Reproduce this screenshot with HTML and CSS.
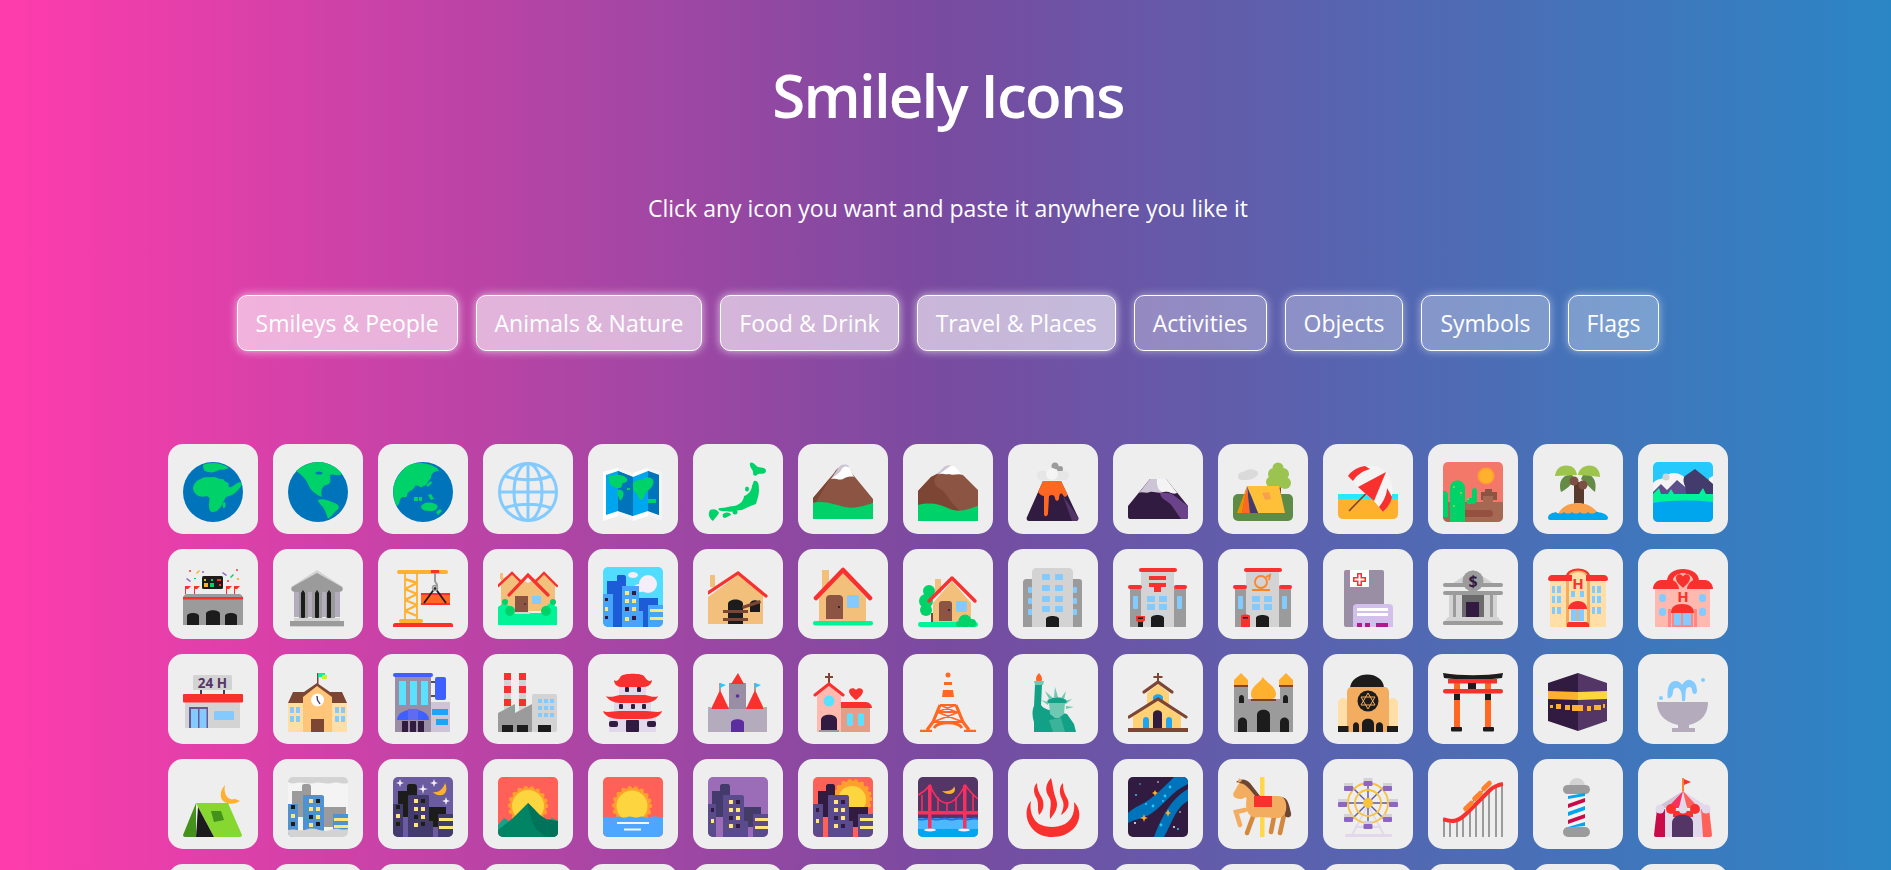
FILE: index.html
```html
<!DOCTYPE html>
<html lang="en">

<head>
	<meta charset="UTF-8">
	<meta name="viewport" content="width=device-width, initial-scale=1.0">
	<title>Smilely Icons</title>
	<link rel="stylesheet" href="styles.css">
</head>

<body>
	<h1>Smilely Icons</h1>
	<p class="subtitle">Click any icon you want and paste it anywhere you like it</p>

	<!-- Categories -->
	<div class="categories">
		<button class="category category-glow">Smileys &amp; People</button>
		<button class="category category-glow">Animals &amp; Nature</button>
		<button class="category category-glow">Food &amp; Drink</button>
		<button class="category category-glow">Travel &amp; Places</button>
		<button class="category">Activities</button>
		<button class="category">Objects</button>
		<button class="category">Symbols</button>
		<button class="category">Flags</button>
	</div>

	<!-- Icons -->
	<div class="icons">
		<!-- row 1 -->
		<div class="tile"><svg class="icon" viewBox="0 0 60 60"><circle cx="30" cy="30" r="30" fill="#0074BA"/><path fill="#00D26A" d="M20 3C26 0 38 0 46 6L40 8C36 6 32 12 26 10C22 10 20 8 20 3ZM10 27C10 22 14 18 18 17C22 14 26 16 30 15C34 15 36 18 40 17C42 20 44 20 46 22C44 26 48 26 50 24C54 22 56 18 59 22C56 28 52 32 46 34C42 34 42 38 40 40C38 46 34 50 30 50C26 50 26 46 26 42C26 38 28 36 24 34C18 36 12 34 10 27Z"/><ellipse cx="41" cy="43" rx="1.5" ry="3" fill="#00D26A"/></svg></div>
		<div class="tile"><svg class="icon" viewBox="0 0 60 60"><circle cx="30" cy="30" r="30" fill="#0074BA"/><path fill="#00D26A" d="M8 9C14 3 24 0 32 0C42 1 50 6 54 12C50 15 44 11 42 13C42 17 44 22 38 23C34 24 32 30 34 35C28 33 22 28 20 22C18 17 14 13 8 9ZM30 38C34 36 40 38 44 40C50 42 52 44 50 47C46 50 44 54 40 57C38 50 36 46 34 44C32 42 30 40 30 38Z"/><ellipse cx="31" cy="11" rx="3.5" ry="1.5" fill="#0074BA"/></svg></div>
		<div class="tile"><svg class="icon" viewBox="0 0 60 60"><circle cx="30" cy="30" r="30" fill="#0074BA"/><path fill="#00D26A" d="M16 3C24 0 34 0 44 6L46 9C40 9 38 12 38 16C34 20 34 24 30 24C28 28 26 22 22 24C20 30 14 28 14 34C12 38 8 30 6 42L4 44C0 38 -1 26 2 20C6 12 10 6 16 3Z"/><path fill="#00D26A" d="M28 44C32 39 40 40 44 43C46 46 42 50 36 49C32 49 28 48 28 44ZM43 50L47 47L49 49L45 53ZM21 35H25V39H21ZM26 35H29V39H26ZM35 33L38 32L41 37L38 38ZM33 23L38 19L39 21L35 25Z"/></svg></div>
		<div class="tile"><svg class="icon" viewBox="0 0 60 60"><g fill="none" stroke="#83CBFF" stroke-width="3"><circle cx="30" cy="30" r="28.5"/><ellipse cx="30" cy="30" rx="14" ry="28.5"/><path d="M30 2V58M2 30H58M7 14C20 19 40 19 53 14M7 46C20 41 40 41 53 46"/></g></svg></div>
		<div class="tile"><svg class="icon" viewBox="0 0 60 60"><path fill="#F4F4F4" d="M0 10L15 6L30 11L45 6L59 10V59L45 54L30 59L15 54L0 59Z"/><path fill="#FFFFFF" d="M0 10L15 6V54L0 59ZM30 11L45 6V54L30 59Z"/><path fill="#00A6ED" d="M3 13L15 9L30 15L45 9L56 13V53L45 49L30 54L15 49L3 53Z"/><path fill="#0074BA" d="M15 9L30 15V54L15 49ZM45 9L56 13V53L45 49Z"/><path fill="#00D26A" d="M6 15C10 12 18 12 22 15C26 17 24 21 20 21C18 23 20 26 16 26C12 26 8 24 6 20ZM15 28C18 27 22 29 20 34C19 38 17 40 16 36C14 32 14 30 15 28ZM30 21C34 16 38 20 42 16C48 14 52 18 50 22C48 28 44 28 42 32C40 38 38 40 36 36C34 30 30 30 30 26ZM45 37H53V41H45ZM24 26H27V28H24Z"/></svg></div>
		<div class="tile"><svg class="icon" viewBox="0 0 60 60"><path fill="#00D26A" d="M42 1C45 -1 47 3 50 5C53 6 58 5 58 9C57 13 54 11 50 12C48 15 45 14 45 11C46 8 41 6 42 1ZM46 19C50 18 51 22 51 28C51 33 49 38 48 42C42 44 38 46 34 48C28 48 24 51 18 49C12 50 8 47 12 46C18 46 22 44 26 44C32 43 36 38 36 34C40 33 44 28 44 24C45 22 45 20 46 19ZM15 52C18 50 22 50 23 53L17 56C15 56 14 54 15 52ZM2 48C6 46 10 48 11 51C10 53 8 55 5 59C2 57 -1 53 2 48Z"/><ellipse cx="39" cy="27" rx="2" ry="2.5" fill="#00D26A"/><circle cx="27" cy="50" r="2.5" fill="#00D26A"/></svg></div>
		<div class="tile"><svg class="icon" viewBox="0 0 60 60"><path fill="#8C5543" d="M0 36L21 11C25 3 33 3 37 9L60 37V50H0Z"/><path fill="#7D4533" d="M0 36L18 15L3 40H0Z"/><path fill="#CDC4D6" d="M18 17L26 5C29 2 32 2 36 4L30 14Z"/><path fill="#FFFFFF" d="M18 17L27 10C30 3 34 4 36 6L41 15C37 14 33 15 30 17C26 19 21 15 18 17Z"/><path fill="#00D26A" d="M0 41C10 38 20 42 32 45C42 47 50 44 60 41V57H0Z"/></svg></div>
		<div class="tile"><svg class="icon" viewBox="0 0 60 60"><path fill="#8C5543" d="M0 29L13 15L26 8C30 3 36 3 39 8L46 14L60 28V50H0Z"/><path fill="#7D4533" d="M0 29L13 15L20 12C14 18 16 24 22 27C28 30 30 36 35 42L42 49H0Z"/><path fill="#CDC4D6" d="M19 12L26 5C29 3 32 3 34 4L28 11Z"/><path fill="#FFFFFF" d="M20 13C24 10 26 13 31 12C35 14 40 11 45 13L39 7C36 3 33 3 31 5Z"/><path fill="#00D26A" d="M0 43C12 40 22 42 32 47C42 51 50 47 60 44V59H0Z"/></svg></div>
		<div class="tile"><svg class="icon" viewBox="0 0 60 60"><path fill="#321B41" d="M20 19H38L55 55C56 57 55 59 53 59H6C4 59 3 57 4 55Z"/><path fill="#533566" d="M40 34L55 55C56 57 55 59 53 59H49Z"/><g fill="#9B9B9B"><circle cx="32" cy="4" r="3.5"/><circle cx="37" cy="7" r="3"/></g><path fill="#E6E6E6" d="M14 12C14 9 18 8 22 9H40C44 9 46 11 46 14C46 16 44 18 40 18H18C15 18 14 15 14 12Z"/><circle cx="29" cy="12" r="6" fill="#F4F4F4"/><path fill="#FF6723" d="M20 19H38L44 31C45 35 41 36 40 33C38 30 36 32 36 37C35 40 32 39 32 36C31 32 28 33 26 34L25 52C24 55 21 55 21 52V34C18 34 16 31 15 30Z"/></svg></div>
		<div class="tile"><svg class="icon" viewBox="0 0 60 60"><path fill="#321B41" d="M0 44L22 17H38L60 44V55C60 56 59 57 58 57H2C1 57 0 56 0 55Z"/><path fill="#6B438B" d="M32 30C38 32 40 30 44 32L60 44V55C60 57 59 57 58 57H53L44 44C40 38 32 38 32 30Z"/><path fill="#CDC4D6" d="M11 31L22 17H38L49 31C44 33 40 28 36 30C30 32 26 29 22 30C18 32 14 29 11 31Z"/><path fill="#F4F4F4" d="M29 17H38L49 31C44 33 41 28 36 30C32 30 28 26 29 17Z"/></svg></div>
		<div class="tile"><svg class="icon" viewBox="0 0 60 60"><path fill="#DADADA" d="M5 14C5 10 10 10 12 9C16 6 22 7 25 10C26 14 20 18 14 18H8C6 18 5 16 5 14Z"/><rect y="32" width="60" height="27" rx="5" fill="#5E8C46"/><rect x="43" y="22" width="5" height="12" fill="#7D4533"/><g fill="#9AC44F"><circle cx="45" cy="6" r="5.5"/><circle cx="41" cy="12" r="6"/><circle cx="50" cy="12" r="6"/><circle cx="39" cy="20" r="6"/><circle cx="52" cy="21" r="6"/><circle cx="45" cy="19" r="7"/></g><path fill="#FFC039" d="M14 24H46L52 51H25Z"/><path fill="#F09000" d="M14 24L4 51H9Z"/><path fill="#FF6723" d="M14 24L9 51H17Z"/><path fill="#433B6B" d="M14 24L17 51H25Z"/><path fill="#F9A04C" d="M29 31L36 30L38 37L32 38Z"/></svg></div>
		<div class="tile"><svg class="icon" viewBox="0 0 60 60"><path fill="#26EAFC" d="M0 37V32H60V40Z"/><path fill="#FFB02E" d="M0 37H60V52C60 55 58 57 55 57H5C2 57 0 55 0 52Z"/><path stroke="#7D4533" stroke-width="1.6" d="M11 49L48 11"/><path fill="#F4F4F4" d="M10 14C18 3 38 0 48 10C58 20 56 40 45 50L36 39L20 25Z"/><path fill="#F8312F" d="M20 25L48 10L36 39Z"/><path fill="#F8312F" d="M10 14C13 9 20 5 27 4L32 7C24 9 18 14 15 19ZM45 50C49 46 53 41 54 35L49 26C49 33 45 40 41 45Z"/></svg></div>
		<div class="tile"><svg class="icon icon-scene" viewBox="0 0 60 60"><rect width="60" height="60" fill="#F4786A"/><circle cx="43" cy="14" r="8.5" fill="#FF9F2E"/><circle cx="43" cy="14" r="7" fill="#FFB02E"/><path fill="#8C5543" d="M38 38V30H42V27H49V30H54V38Z"/><path fill="#A56953" d="M0 40H60V60H0Z"/><path fill="#A56953" d="M40 34H50V42H40Z"/><rect x="14" y="48" width="36" height="7" rx="3.5" fill="#96503F"/><path fill="#00D26A" d="M7 26C7 16 22 16 22 26V60H7ZM24 42H30C32 42 34 40 34 38V29C34 25 29 25 29 29V36H24ZM5 55H0V29H2C4 29 5 31 5 33Z"/><path fill="#7FD04C" d="M10 24H12V26H10ZM17 30H19V32H17ZM10 43H12V45H10ZM24 36H26V38H24Z"/></svg></div>
		<div class="tile"><svg class="icon" viewBox="0 0 60 60"><rect x="26" y="20" width="10" height="24" fill="#593B2D"/><path fill="#F9A04C" d="M10 52C14 44 22 41 30 41C38 41 46 45 51 52Z"/><path fill="#00A6ED" d="M0 56C0 52 4 51 8 50C10 52 14 52 16 50C18 52 22 52 24 50C26 52 30 52 32 50C34 52 38 52 40 50C42 52 46 52 48 50C52 50 60 52 60 56C60 58 58 58 56 58H4C2 58 0 58 0 56Z"/><path fill="#648B45" d="M24 13C14 12 10 20 13 30C18 28 24 22 27 17ZM35 13C42 11 50 16 47 30C42 26 37 20 33 17Z"/><path fill="#9DC44D" d="M7 14C8 6 14 2 22 4C26 5 28 8 29 13C22 13 14 14 7 14ZM30 13C31 6 38 2 45 4C50 6 52 10 52 15C44 14 36 13 30 13Z"/><circle cx="26" cy="19" r="4.5" fill="#7D4F45"/><circle cx="35" cy="23" r="4.5" fill="#7D4F45"/></svg></div>
		<div class="tile"><svg class="icon icon-scene" viewBox="0 0 60 60"><rect width="60" height="60" fill="#26C9FC"/><path fill="#F4F4F4" d="M0 21C4 16 8 18 12 15C16 10 24 10 30 14L46 30H0Z"/><circle cx="13" cy="15" r="3.5" fill="#D3D3D3"/><path fill="#5B4F8C" d="M0 30L8 22L14 28L24 18L38 30V36H0Z"/><path fill="#F4F4F4" d="M60 14L56 16V24L60 26Z"/><path fill="#433B6B" d="M32 14L42 7L52 15L60 22V36H34L32 24C30 20 30 16 32 14Z"/><path fill="#00F397" d="M0 32L6 26L8 32H15L18 27L21 32H24H46L50 26L53 32H60V40H0Z"/><path fill="#00A6ED" d="M0 41C20 38 40 38 60 40V60H0Z"/></svg></div>

		<!-- row 2 -->
		<div class="tile"><svg class="icon" viewBox="0 0 60 60"><path fill="#9B9B9B" d="M0 31C0 29 2 27 4 27H56C58 27 60 29 60 31V58H0Z"/><rect y="30" width="60" height="2.5" fill="#F8312F"/><path fill="#1C1C1C" d="M4 58V49C4 45 16 45 16 49V58ZM23 58V47C23 42 37 42 37 47V58ZM42 58V49C42 45 54 45 54 49V58Z"/><rect x="19" y="9" width="21" height="13" rx="1.5" fill="#1C1C1C"/><g fill="#FFB02E"><rect x="21" y="12" width="2" height="2"/><rect x="21" y="16" width="4" height="4"/></g><g fill="#00D26A"><rect x="27" y="16" width="4" height="4"/><rect x="28" y="12" width="2" height="2"/></g><rect x="34" y="12" width="4" height="2" fill="#F8312F"/><rect x="36" y="17" width="2" height="2" fill="#F8312F"/><g fill="#F8312F"><path d="M2 19H8L5 22H3V27H2ZM11 19H17L14 22H12V27H11ZM43 19H49L46 22H44V27H43ZM51 19H57L54 22H52V27H51Z"/><circle cx="7" cy="4" r="1"/><circle cx="54" cy="3" r="1"/><circle cx="45" cy="14" r="1"/></g><g fill="#8D65C5"><path d="M4 11L8 14L7 15L3 12ZM40 5L44 8L43 9L39 6Z"/><circle cx="20" cy="5" r="1"/></g><path fill="#FFB02E" d="M13 6L16 3L17 4L14 7ZM54 11H56V13H54Z"/><path fill="#00D26A" d="M11 11H13V12H11ZM47 10L50 7L51 8L48 11Z"/></svg></div>
		<div class="tile"><svg class="icon" viewBox="0 0 60 60"><path fill="#D3D3D3" d="M29 3L55 20H3Z"/><path fill="#9B9B9B" d="M29 6L54 20C56 22 54 25 51 25H7C4 25 2 22 4 20Z"/><rect x="6" y="25" width="46" height="25" fill="#B4ACBC"/><g fill="#9B9B9B"><rect x="11" y="25" width="9" height="26"/><rect x="24" y="25" width="10" height="26"/><rect x="38" y="25" width="9" height="26"/></g><g fill="#1C1C1C"><path d="M15 23L17 26V50L15 53L13 50V26Z"/><path d="M29 23L31 26V50L29 53L27 50V26Z"/><path d="M41 23L43 26V50L41 53L39 50V26Z"/></g><rect x="2" y="54" width="54" height="5" fill="#9B9B9B"/><rect x="2" y="59" width="54" height="1" fill="#D3D3D3"/><rect x="6" y="51" width="46" height="3" fill="#D3D3D3"/></svg></div>
		<div class="tile"><svg class="icon" viewBox="0 0 60 60"><rect x="4" y="3" width="51" height="4" rx="2" fill="#FFB02E"/><g fill="none" stroke="#FFB02E" stroke-width="1.8"><path d="M12 7V53M24 7V53"/><path stroke-width="2.4" d="M12 12L24 16M24 16L12 22M12 22L24 27M24 27L12 33M12 33L24 38M24 38L12 44M12 44L24 49"/></g><rect x="6" y="52" width="24" height="4" rx="2" fill="#FFB02E"/><path fill="#F8312F" d="M0 58C0 57 1 56 2 56H58C59 56 60 57 60 58V60H0Z"/><rect x="38" y="3" width="8" height="3" fill="#F8312F"/><path stroke="#9B9B9B" stroke-width="2" fill="none" d="M42 6V14C42 16 46 17 43 20"/><rect x="28" y="26" width="29" height="12" fill="#FF6723"/><rect x="28" y="26" width="29" height="2" fill="#F8312F"/><rect x="28" y="36" width="29" height="2" fill="#F8312F"/><path stroke="#1C1C1C" stroke-width="1.8" fill="none" d="M31 36L42 21L53 36"/><circle cx="42" cy="21" r="2.5" fill="none" stroke="#9B9B9B" stroke-width="1.5"/></svg></div>
		<div class="tile"><svg class="icon" viewBox="0 0 60 60"><path fill="#F3C07B" d="M3 12L14 7L30 16L46 7L57 15V44H3Z"/><rect x="2" y="6" width="3" height="6" fill="#F3C07B"/><g fill="none" stroke="#F8312F" stroke-width="2.4" stroke-linecap="round"><path d="M0 19L14 6L22 14M38 14L46 6L59 19"/><path stroke-width="3.2" d="M11 28L30 8L50 28"/></g><path fill="#8C5543" d="M17 29H30V46H17Z"/><circle cx="27" cy="37" r=".8" fill="#1C1C1C"/><rect x="34" y="29" width="9" height="8" fill="#83CBFF"/><path fill="#00F397" d="M0 40L6 36L13 40V46H46V41L52 36L59 40V58H0Z"/><rect x="16" y="45" width="16" height="2" fill="#D3D3D3"/><g fill="#00D26A"><circle cx="12" cy="44" r="5"/><circle cx="7" cy="35" r="3"/><circle cx="48" cy="44" r="5"/><circle cx="55" cy="35" r="3"/></g></svg></div>
		<div class="tile"><svg class="icon icon-scene" viewBox="0 0 60 60"><rect width="60" height="60" fill="#51DDFF"/><circle cx="45" cy="17" r="9" fill="#F3EEF8"/><ellipse cx="37" cy="21" rx="7" ry="4" fill="#F3EEF8"/><ellipse cx="30" cy="8" rx="5" ry="3" fill="#F3EEF8"/><path fill="#1C5CD7" d="M4 60V14H14V9C14 8 15 8 16 8H21C22 8 23 9 23 10V60ZM36 31H55V60H36Z"/><path fill="#46A4FB" d="M0 27H10V60H0ZM19 19H36V44H40V60H19ZM45 38H60V60H45Z"/><g fill="#321B41"><rect x="2" y="31" width="3" height="3"/><rect x="2" y="49" width="3" height="3"/><rect x="29" y="24" width="4" height="4"/><rect x="22" y="40" width="4" height="4"/><rect x="29" y="49" width="4" height="4"/></g><g fill="#FFE57A"><rect x="2" y="40" width="3" height="4"/><rect x="22" y="24" width="4" height="4"/><rect x="22" y="32" width="4" height="4"/><rect x="29" y="32" width="4" height="4"/><rect x="29" y="40" width="4" height="4"/><rect x="22" y="50" width="4" height="4"/><rect x="47" y="42" width="13" height="3"/><rect x="47" y="50" width="13" height="3"/></g></svg></div>
		<div class="tile"><svg class="icon" viewBox="0 0 60 60"><rect x="2" y="8" width="5" height="12" fill="#F3C07B"/><path fill="#F3C07B" d="M0 30L30 8L55 28V57H0Z"/><path fill="none" stroke="#F8312F" stroke-width="3.2" stroke-linecap="round" d="M0 26L30 6L58 29"/><path fill="#1C1C1C" d="M20 57V37C20 31 35 31 35 37V57Z"/><rect x="15" y="43" width="25" height="3" fill="#7D4533"/><rect x="15" y="51" width="25" height="3" fill="#7D4533"/><path fill="#1C1C1C" d="M42 45V37C42 32 52 32 52 37V45Z"/><path fill="#7D4533" d="M34 39L52 33L53 36L35 42Z"/></svg></div>
		<div class="tile"><svg class="icon" viewBox="0 0 60 60"><rect x="9" y="3" width="7" height="18" fill="#F3C07B"/><path fill="#F3C07B" d="M6 31L30 6L53 31V54H6Z"/><path fill="none" stroke="#F8312F" stroke-width="4.6" stroke-linecap="round" stroke-linejoin="round" d="M3 31L30 3L57 31"/><path fill="#8C5543" d="M13 52V32C13 29 15 28 17 28H26C28 28 30 29 30 32V52Z"/><circle cx="26" cy="40" r="1" fill="#1C1C1C"/><rect x="34" y="28" width="12" height="13" rx="1" fill="#83CBFF"/><rect y="54" width="60" height="4.5" rx="2.2" fill="#00F397"/></svg></div>
		<div class="tile"><svg class="icon" viewBox="0 0 60 60"><rect x="17" y="12" width="6" height="14" fill="#F3C07B"/><g fill="#00D26A"><circle cx="11" cy="24" r="6"/><circle cx="8" cy="34" r="7"/><circle cx="8" cy="43" r="6"/></g><rect x="13" y="46" width="2" height="10" fill="#7D4533"/><path fill="#F3C07B" d="M15 36L34 14L53 36V56H15Z"/><path fill="none" stroke="#F8312F" stroke-width="3.4" stroke-linecap="round" stroke-linejoin="round" d="M11 34L34 11L57 34"/><path fill="#8C5543" d="M21 54V37C21 35 22 34 24 34H31C33 34 34 35 34 37V54Z"/><circle cx="31" cy="43" r=".9" fill="#1C1C1C"/><rect x="38" y="34" width="11" height="11" rx="1" fill="#83CBFF"/><rect y="55" width="60" height="5" rx="2.4" fill="#00F397"/><g fill="#00D26A"><circle cx="47" cy="54" r="6.5"/><circle cx="54" cy="56" r="4"/><circle cx="41" cy="57" r="3"/></g></svg></div>
		<div class="tile"><svg class="icon" viewBox="0 0 60 60"><path fill="#9B9B9B" d="M0 15C0 13 2 12 3 12H12V60H0ZM48 12H56C58 12 59 13 59 15V60H48Z"/><path fill="#D3D3D3" d="M9 5C9 3 11 1 13 1H46C48 1 50 3 50 5V60H9Z"/><g fill="#83CBFF"><rect x="19" y="7" width="8" height="6" rx="1"/><rect x="32" y="7" width="8" height="6" rx="1"/><rect x="19" y="18" width="8" height="6" rx="1"/><rect x="32" y="18" width="8" height="6" rx="1"/><rect x="19" y="29" width="8" height="6" rx="1"/><rect x="32" y="29" width="8" height="6" rx="1"/><rect x="19" y="39" width="8" height="6" rx="1"/><rect x="32" y="39" width="8" height="6" rx="1"/><rect x="5" y="20" width="4" height="6" rx="1"/><rect x="50" y="20" width="4" height="6" rx="1"/><rect x="5" y="31" width="4" height="6" rx="1"/><rect x="50" y="31" width="4" height="6" rx="1"/><rect x="5" y="42" width="4" height="6" rx="1"/><rect x="50" y="42" width="4" height="6" rx="1"/></g><path fill="#1C1C1C" d="M23 60V52C23 48 36 48 36 52V60Z"/></svg></div>
		<div class="tile"><svg class="icon" viewBox="0 0 60 60"><path fill="#9B9B9B" d="M2 21H58V60H2Z"/><rect x="13" y="5" width="33" height="55" fill="#D3D3D3"/><g fill="#F8312F"><rect x="11" y="1" width="38" height="4" rx="2"/><rect y="18" width="14" height="4" rx="2"/><rect x="46" y="18" width="13" height="4" rx="2"/><rect x="21" y="9" width="17" height="4"/><path d="M21 16H38V20H33V25H26V20H21Z"/></g><g fill="#83CBFF"><rect x="19" y="29" width="8" height="6"/><rect x="31" y="29" width="8" height="6"/><rect x="19" y="37" width="8" height="6"/><rect x="31" y="37" width="8" height="6"/><rect x="5" y="29" width="5" height="13" rx="1"/><rect x="49" y="29" width="5" height="13" rx="1"/></g><path fill="#1C1C1C" d="M23 60V51C23 47 36 47 36 51V60ZM10 53H15V60H10Z"/><path fill="#F8312F" d="M8 49H17V53C17 56 8 56 8 53Z"/><rect x="10" y="50.5" width="5" height="1.5" fill="#1C1C1C"/></svg></div>
		<div class="tile"><svg class="icon" viewBox="0 0 60 60"><path fill="#9B9B9B" d="M2 21H58V60H2Z"/><rect x="13" y="5" width="33" height="55" fill="#D3D3D3"/><g fill="#F8312F"><rect x="11" y="1" width="38" height="4" rx="2"/><rect y="18" width="14" height="4" rx="2"/><rect x="46" y="18" width="13" height="4" rx="2"/></g><g fill="none" stroke="#FF822D" stroke-width="1.8"><circle cx="28" cy="15" r="6"/><path d="M19 23H37M33 10L37 8L36 13"/></g><g fill="#83CBFF"><rect x="19" y="29" width="8" height="6"/><rect x="31" y="29" width="8" height="6"/><rect x="19" y="37" width="8" height="6"/><rect x="31" y="37" width="8" height="6"/><rect x="5" y="29" width="5" height="13" rx="1"/><rect x="49" y="29" width="5" height="13" rx="1"/></g><path fill="#1C1C1C" d="M23 60V51C23 47 36 47 36 51V60Z"/><path fill="#F8312F" d="M8 49C8 47 17 47 17 49V60H8Z"/><rect x="10" y="50" width="5" height="1.5" fill="#1C1C1C"/></svg></div>
		<div class="tile"><svg class="icon" viewBox="0 0 60 60"><rect x="6" y="3" width="40" height="57" rx="2" fill="#998EA4"/><rect x="12" y="3" width="19" height="17" fill="#FFFFFF"/><path fill="#F8312F" d="M19 6H24V10H28V15H24V19H19V15H15V10H19Z"/><path fill="#FFFFFF" d="M20.5 7.5H22.5V11.5H26.5V13.5H22.5V17.5H20.5V13.5H16.5V11.5H20.5Z"/><path fill="#D3BFEB" d="M15 40C15 38 17 37 19 37H51C53 37 55 38 55 40V60H15Z"/><g fill="#FFFFFF"><rect x="19" y="41" width="31" height="3"/><rect x="19" y="46" width="31" height="3"/></g><g fill="#AD1C8B"><rect x="19" y="56" width="5" height="4"/><rect x="27" y="56" width="5" height="4"/><rect x="38" y="56" width="12" height="4"/></g></svg></div>
		<div class="tile"><svg class="icon" viewBox="0 0 60 60"><path fill="#D3D3D3" d="M30 3L56 20H4Z"/><rect y="16" width="60" height="4" rx="2" fill="#9B9B9B"/><circle cx="30" cy="14" r="10.5" fill="#9B9B9B"/><text class="glyph" x="30" y="20" font-size="16" fill="#321B41" text-anchor="middle">$</text><rect y="24" width="60" height="4" rx="2" fill="#9B9B9B"/><rect x="6" y="28" width="48" height="22" fill="#D3D3D3"/><g fill="#9B9B9B"><rect x="10" y="28" width="3" height="22"/><rect x="47" y="28" width="3" height="22"/></g><rect x="19" y="28" width="22" height="22" fill="#6B6B6B"/><rect x="23" y="35" width="13" height="15" fill="#321B41"/><path fill="#D3D3D3" d="M5 50H55L58 54H2Z"/><rect y="54" width="60" height="4" rx="1.5" fill="#9B9B9B"/></svg></div>
		<div class="tile"><svg class="icon" viewBox="0 0 60 60"><rect x="2" y="13" width="56" height="47" fill="#FFDEA7"/><path fill="#F3AD61" d="M18 10C18 -1 42 -1 42 10V60H18Z"/><path fill="#FFDEA7" d="M21 12C21 3 39 3 39 12V60H21Z"/><path fill="none" stroke="#F8312F" stroke-width="2" d="M19 10C19 -0 41 -0 41 10"/><path fill="#F8312F" d="M0 12C0 10 2 8 4 8H24V14H2C1 14 0 13 0 12ZM38 8H56C58 8 60 10 60 12C60 13 59 14 58 14H38Z"/><text class="glyph" x="30" y="22" font-size="15" fill="#F8312F" text-anchor="middle">H</text><g fill="#83CBFF"><rect x="4" y="19" width="3" height="7"/><rect x="9" y="19" width="4" height="7"/><rect x="4" y="29" width="3" height="7"/><rect x="9" y="29" width="4" height="7"/><rect x="4" y="40" width="3" height="7"/><rect x="9" y="40" width="4" height="7"/><rect x="44" y="19" width="3" height="7"/><rect x="49" y="19" width="4" height="7"/><rect x="44" y="29" width="3" height="7"/><rect x="49" y="29" width="4" height="7"/><rect x="44" y="40" width="3" height="7"/><rect x="49" y="40" width="4" height="7"/><rect x="23" y="24" width="4" height="6"/><rect x="32" y="24" width="4" height="6"/><rect x="23" y="41" width="13" height="13"/></g><rect x="29" y="41" width="1.5" height="13" fill="#F3AD61"/><path fill="#F8312F" d="M20 42C20 38 24 34 30 34C36 34 39 38 39 42Z"/><path fill="#F8312F" d="M19 60V57C19 56 20 55 21 55H38C39 55 41 56 41 57V60Z"/></svg></div>
		<div class="tile"><svg class="icon" viewBox="0 0 60 60"><rect x="2" y="20" width="55" height="40" fill="#FFB9AE"/><path fill="#F8312F" d="M14 14C14 -2 46 -2 46 14H40C40 4 20 4 20 14Z"/><path fill="#FFB9AE" d="M20 14C20 4 40 4 40 14V22H20Z"/><path fill="#F8312F" d="M0 22C0 17 4 13 8 13H18C22 13 26 18 26 22ZM34 22C34 18 38 13 42 13H52C56 13 60 17 60 22Z"/><path fill="#F8312F" d="M30 21C27 18 23 15 23 11C23 7 28 6 30 9.500C32 6 37 7 37 11C37 15 33 18 30 21Z"/><text class="glyph" x="30" y="35" font-size="15" fill="#F8312F" text-anchor="middle">H</text><g fill="#83CBFF"><rect x="6" y="27" width="7" height="8" rx="3"/><rect x="46" y="27" width="7" height="8" rx="3"/><rect x="6" y="41" width="7" height="8" rx="3"/><rect x="46" y="41" width="7" height="8" rx="3"/></g><rect x="15" y="42" width="3" height="18" fill="#FF8687"/><rect x="41" y="42" width="3" height="18" fill="#FF8687"/><rect x="19" y="44" width="21" height="16" fill="#FF8687"/><rect x="21" y="44" width="7" height="14" fill="#83CBFF"/><rect x="30" y="44" width="8" height="14" fill="#83CBFF"/><path fill="#F8312F" d="M18 46C18 40 22 37 29 37C36 37 41 40 41 46Z"/></svg></div>

		<!-- row 3 -->
		<div class="tile"><svg class="icon" viewBox="0 0 60 60"><rect x="10" y="3" width="39" height="15" rx="1.5" fill="#D3D3D3"/><text class="glyph" x="29.5" y="16" font-size="13.5" fill="#533566" text-anchor="middle">24 H</text><rect x="17" y="18" width="2" height="5" fill="#433B6B"/><rect x="40" y="18" width="2" height="5" fill="#433B6B"/><rect x="2" y="30" width="55" height="26" fill="#D3D3D3"/><rect y="22" width="60" height="8.5" rx="1" fill="#F8312F"/><rect x="6" y="35" width="19" height="21" fill="#635994"/><rect x="8" y="37" width="7" height="19" fill="#83CBFF"/><rect x="16.5" y="37" width="7" height="19" fill="#83CBFF"/><rect x="31" y="39" width="20" height="9" rx="1" fill="#83CBFF"/></svg></div>
		<div class="tile"><svg class="icon" viewBox="0 0 60 60"><rect x="29" y="1" width="1.5" height="12" fill="#7D4533"/><path fill="#00F397" d="M30 1H37V5H30Z"/><path fill="#C8F02F" d="M34 3H39V7H34Z"/><path fill="#7D4533" d="M5 20H16L29 11L42 20H54L59 31H0Z"/><rect y="31" width="15" height="29" fill="#FFDEA7"/><rect x="44" y="31" width="15" height="29" fill="#FFDEA7"/><path fill="#FFC67A" d="M15 32V25L29 14L44 25V60H15Z"/><circle cx="29.5" cy="28" r="6.5" fill="#FFFFFF"/><path stroke="#433B6B" stroke-width="1.4" fill="none" d="M29 24L29.5 28L32 32"/><rect x="23" y="47" width="13" height="13" fill="#7D4533"/><g fill="#83CBFF"><rect x="2" y="35" width="4" height="6"/><rect x="8" y="35" width="4" height="6"/><rect x="2" y="44" width="4" height="6"/><rect x="8" y="44" width="4" height="6"/><rect x="47" y="35" width="4" height="6"/><rect x="53" y="35" width="4" height="6"/><rect x="47" y="44" width="4" height="6"/><rect x="53" y="44" width="4" height="6"/></g></svg></div>
		<div class="tile"><svg class="icon" viewBox="0 0 60 60"><rect x="37" y="30" width="20" height="30" fill="#CDC4D6"/><g fill="#1CA5F5"><rect x="39" y="37" width="16" height="6"/><rect x="43" y="47" width="12" height="6"/></g><rect x="2" y="5" width="36" height="55" fill="#998EA4"/><rect width="40" height="4" y="1" rx="2" fill="#3F5FFF"/><g fill="#5BE0FF"><rect x="6" y="9" width="7" height="24"/><rect x="17" y="9" width="7" height="24"/><rect x="28" y="9" width="7" height="24"/></g><path stroke="#1C1C1C" stroke-width="1.4" d="M38 10H43M38 24H43"/><rect x="42" y="5" width="11" height="23" rx="2" fill="#3F5FFF"/><path fill="#3F5FFF" d="M4 48C4 34 36 34 36 48Z"/><path fill="#5F6CF0" d="M15 37H25V48H15Z"/><path fill="#321B41" d="M9 60V49H15V60ZM17 60V49H23V60ZM25 60V49H31V60Z"/></svg></div>
		<div class="tile"><svg class="icon" viewBox="0 0 60 60"><rect x="6" y="1" width="7" height="40" fill="#D3D3D3"/><rect x="21" y="1" width="7" height="40" fill="#D3D3D3"/><g fill="#F8312F"><rect x="6" y="1" width="7" height="7"/><rect x="6" y="14" width="7" height="7"/><rect x="6" y="27" width="7" height="7"/><rect x="21" y="1" width="7" height="7"/><rect x="21" y="14" width="7" height="7"/><rect x="21" y="27" width="7" height="7"/></g><rect x="34" y="22" width="25" height="38" rx="2" fill="#D3D3D3"/><g fill="#83CBFF"><rect x="40" y="27" width="4" height="4"/><rect x="46" y="27" width="4" height="4"/><rect x="52" y="27" width="4" height="4"/><rect x="40" y="34" width="4" height="4"/><rect x="46" y="34" width="4" height="4"/><rect x="52" y="34" width="4" height="4"/><rect x="40" y="41" width="4" height="4"/><rect x="46" y="41" width="4" height="4"/><rect x="52" y="41" width="4" height="4"/></g><path fill="#9B9B9B" d="M0 41L17 32V41L34 32V60H0Z"/><g fill="#1C1C1C"><rect x="4" y="53" width="11" height="7"/><rect x="19" y="53" width="11" height="7"/><rect x="40" y="53" width="13" height="7"/></g></svg></div>
		<div class="tile"><svg class="icon" viewBox="0 0 60 60"><rect x="6" y="46" width="47" height="14" fill="#E1D8EC"/><rect x="11" y="30" width="37" height="10" fill="#E1D8EC"/><rect x="16" y="13" width="27" height="11" fill="#E1D8EC"/><g fill="#F8312F"><path d="M11 8C14 11 16 7 18 4C22 1 38 1 41 4C43 7 46 11 49 8C49 12 45 15 41 15H18C14 15 11 12 11 8Z"/><path d="M3 24C7 26 12 24 17 23H42C47 24 52 26 55 24C54 28 48 31 42 31H17C11 31 5 28 3 24Z"/><path d="M0 39C4 41 10 39 16 39H43C49 39 55 41 59 39C58 44 50 47 43 47H16C9 47 1 44 0 39Z"/></g><g fill="#321B41"><rect x="22" y="15" width="4" height="5" rx="1"/><rect x="34" y="15" width="4" height="5" rx="1"/><rect x="16" y="32" width="4" height="5" rx="1"/><rect x="28" y="32" width="4" height="5" rx="1"/><rect x="39" y="32" width="4" height="5" rx="1"/><rect x="6" y="49" width="9" height="6" rx="2"/><rect x="23" y="48" width="13" height="12" rx="1"/><rect x="44" y="49" width="9" height="6" rx="2"/></g></svg></div>
		<div class="tile"><svg class="icon" viewBox="0 0 60 60"><path fill="#B4ACBC" d="M0 35H3V37H8V35H14V37H20V35H26V37H33V35H40V37H46V35H52V37H56V35H59V60H0Z"/><rect x="21" y="11" width="17" height="26" fill="#998EA4"/><circle cx="29.5" cy="24" r="1.8" fill="#5C2D9E"/><path fill="#5C2D9E" d="M23 60V51C23 46 36 46 36 51V60Z"/><g fill="#F8312F"><path d="M30 1L36 12H23Z"/><path d="M12 18L21 37H3Z"/><path d="M47 18L56 37H38Z"/></g><rect x="11.5" y="11" width="1" height="8" fill="#7D4533"/><rect x="46.5" y="11" width="1" height="8" fill="#7D4533"/><g fill="#26C9FC"><path d="M12 11L18 13L12 16Z"/><path d="M47 11L53 13L47 16Z"/></g></svg></div>
		<div class="tile"><svg class="icon" viewBox="0 0 60 60"><rect x="28" y="36" width="29" height="24" fill="#E39D89"/><path fill="#FFB9AE" d="M4 24L16 14L28 24V60H4Z"/><rect x="15" y="1" width="2" height="11" fill="#7D4533"/><rect x="12" y="4" width="8" height="2" fill="#7D4533"/><path fill="none" stroke="#F8312F" stroke-width="3" stroke-linecap="round" d="M2 23L16 12L30 23"/><circle cx="16" cy="29" r="5.5" fill="#5BE0FF"/><path fill="#321B41" d="M8 58V48C8 41 24 41 24 48V58Z"/><rect x="6" y="58" width="20" height="2" fill="#9B9B9B"/><path fill="#F8312F" d="M28 30H53C56 30 59 33 59 36H28Z"/><g fill="#5BE0FF"><rect x="34" y="41" width="6" height="13" rx="2"/><rect x="45" y="41" width="6" height="13" rx="2"/></g><path fill="#F8312F" d="M43 28C40 26 36 22 36 19C36 16 41 15 43 18C45 15 50 16 50 19C50 22 46 26 43 28Z"/></svg></div>
		<div class="tile"><svg class="icon" viewBox="0 0 60 60"><g fill="#FF6723"><circle cx="30" cy="3" r="2.500"/><rect x="26" y="10" width="8" height="3"/><path d="M25 18H35L36 25H24Z"/></g><g fill="none" stroke="#FF6723" stroke-linejoin="round"><path stroke-width="3.200" d="M22 33L15 50L9 58M38 33L45 50L51 58"/><path stroke-width="1.800" d="M22 33H38M19 40H41M15 50H45M22 33L38 40L19 40L38 33M19 40L45 50M41 40L15 50"/><path stroke-width="2.800" d="M16 56C20 49 40 49 44 56"/><path stroke-width="2.400" d="M2 59H14M46 59H58"/></g></svg></div>
		<div class="tile"><svg class="icon" viewBox="0 0 60 60"><path fill="#FF6723" d="M16 1C19 4 20 7 18 10H14C12 7 13 4 16 1Z"/><path fill="#6FC9B2" d="M11 9H21L20 13H12Z"/><path fill="#12A187" d="M12 13H19L18 34H11Z"/><g fill="#6FC9B2"><path d="M26 27L22 19L30 26Z"/><path d="M31 25L32 15L35 25Z"/><path d="M38 26L43 19L41 28Z"/><path d="M42 29L49 27L43 32Z"/><path d="M43 34L51 35L43 37Z"/><path d="M25 30L18 28L25 33Z"/></g><path fill="#12A187" d="M11 34L18 33C20 36 23 37 26 38L44 42L51 52L53 60H11V50C9 44 9 38 11 34Z"/><path fill="#12A187" d="M24 29C30 24 38 24 44 29L42 32H26Z"/><path fill="#6FC9B2" d="M26 31H42L41 42L36 46H32L27 42Z"/><path fill="#6FC9B2" opacity=".45" d="M26 48L38 46L42 60H30Z"/></svg></div>
		<div class="tile"><svg class="icon" viewBox="0 0 60 60"><rect x="29" y="1" width="2" height="11" fill="#7D4533"/><rect x="25.500" y="4" width="9" height="2" fill="#7D4533"/><path fill="#FFD074" d="M19 21L30 12L41 21V34H19Z"/><path fill="none" stroke="#7D4533" stroke-width="3.200" stroke-linecap="round" d="M16 20L30 10L44 20"/><path fill="#1CA5F5" d="M25 31V26C25 21 35 21 35 26V31Z"/><path fill="#FFD074" d="M5 44L30 28L53 44V56H5Z"/><path fill="none" stroke="#7D4533" stroke-width="3.200" stroke-linecap="round" d="M1 45L30 27L58 45"/><path fill="#321B41" d="M25 56V42C25 37 34 37 34 42V56Z"/><path fill="#1CA5F5" d="M15 56V48C15 44 21 44 21 48V56ZM38 56V48C38 44 44 44 44 48V56Z"/><rect y="56" width="60" height="4" fill="#7D4533"/></svg></div>
		<div class="tile"><svg class="icon" viewBox="0 0 60 60"><g fill="#9B9B9B"><rect x="1" y="14" width="14" height="46"/><rect x="47" y="14" width="13" height="46"/><rect x="15" y="27" width="32" height="33"/></g><g fill="#FFB02E"><path d="M8 1L15 8V13H1V8Z"/><path d="M53 1L60 8V13H46V8Z"/><path d="M30 5C32 10 43 14 43 22C43 25 41 27 38 27H22C19 27 18 25 18 22C18 14 28 10 30 5Z"/></g><g fill="#7D4533"><rect x="1" y="13" width="14" height="2"/><rect x="46" y="13" width="14" height="2"/><rect x="18" y="27" width="25" height="2"/></g><g fill="#1C1C1C"><path d="M5 60V50C5 44 14 44 14 50V60ZM24 60V43C24 36 37 36 37 43V60ZM47 60V50C47 44 56 44 56 50V60ZM6 31V26C6 22 11 22 11 26V31ZM50 31V26C50 22 55 22 55 26V31Z"/></g></svg></div>
		<div class="tile"><svg class="icon" viewBox="0 0 60 60"><path fill="#1C1C1C" d="M12 16C14 -2 45 -2 46 16Z"/><path fill="#FFDEA7" d="M0 32C0 24 10 24 10 32V60H0ZM49 32C49 24 60 24 60 32V60H49Z"/><path fill="#F3AD61" d="M9 20C9 17 11 15 14 15H46C49 15 51 17 51 20V60H9Z"/><circle cx="30" cy="29" r="10.500" fill="#1C1C1C"/><g fill="none" stroke="#F3AD61" stroke-width="1"><path d="M30 21L37 33H23Z"/><path d="M30 37L37 25H23Z"/></g><g fill="#1C1C1C"><rect y="54" width="10.500" height="6"/><rect x="49" y="54" width="11" height="6"/><path d="M15 60V54C15 49 21 49 21 54V60ZM24 60V52C24 45 36 45 36 52V60ZM38 60V54C38 49 45 49 45 54V60Z"/></g></svg></div>
		<div class="tile"><svg class="icon" viewBox="0 0 60 60"><g fill="#FF6723"><rect x="11" y="10" width="6" height="45"/><rect x="42" y="10" width="6" height="45"/></g><path fill="#1C1C1C" d="M0 1C18 4 42 4 60 1L59 6C42 8 18 8 1 6Z"/><rect x="5" y="7" width="49" height="4.500" fill="#F8312F"/><rect x="25" y="11" width="8" height="6" fill="#1C1C1C"/><rect y="17" width="60" height="4.500" rx="2.200" fill="#F8312F"/><g fill="#1C1C1C"><rect x="11" y="22" width="6" height="6"/><rect x="42" y="22" width="6" height="6"/><rect x="8" y="55" width="11" height="4.500" rx="1"/><rect x="40" y="55" width="11" height="4.500" rx="1"/></g></svg></div>
		<div class="tile"><svg class="icon" viewBox="0 0 60 60"><path fill="#321B41" d="M0 11L30 1V59L0 49Z"/><path fill="#533566" d="M30 1L59 11V49L30 59Z"/><path fill="#FFB02E" d="M0 19L30 20V28L0 27Z"/><path fill="#FCD53F" d="M30 20L59 19V27L30 28Z"/><g fill="#FFB02E"><rect x="2" y="33" width="3" height="3"/><rect x="8" y="32" width="5" height="5"/><rect x="17" y="33" width="5" height="5"/><rect x="24" y="33" width="11" height="6"/><rect x="39" y="34" width="4" height="5"/><rect x="46" y="33" width="7" height="5"/><rect x="55" y="32" width="2" height="4"/></g></svg></div>
		<div class="tile"><svg class="icon" viewBox="0 0 60 60"><path fill="#B4ACBC" d="M4 30H55C55 40 50 50 36 53V56H42V60H19V56H25V53C10 50 4 40 4 30Z"/><g fill="#83CBFF"><path d="M15 26C14 22 14 10 22 9C26 9 28 11 29 13C31 10 34 7 37 8C42 9 44 14 44 19C44 23 39 23 39 18C39 15 36 14 34 16C32 18 33 22 32 29H29C29 24 29 18 25 16C22 15 20 17 20 20C20 24 17 27 15 26Z"/><circle cx="8" cy="26" r="2"/><circle cx="50" cy="8" r="2"/></g></svg></div>

		<!-- row 4 -->
		<div class="tile"><svg class="icon" viewBox="0 0 60 60"><path fill="#FFB02E" d="M42 8C36 14 36 24 44 26C48 28 54 26 57 24C54 23 54 22 51 22C46 24 40 18 42 8Z"/><path fill="#86D72F" d="M13 26H45L59 58C59 59 58 60 57 60H31Z"/><path fill="#44911B" d="M13 26L0 58C0 59 1 60 2 60H13Z"/><path fill="#1C1C1C" d="M15 30L31 60H13Z"/><path fill="#44911B" d="M28 34L38 34L41 43L31 45Z"/></svg></div>
		<div class="tile"><svg class="icon icon-scene" viewBox="0 0 60 60"><rect width="60" height="60" fill="#F4F4F4"/><path fill="#9B9B9B" d="M4 14H14V9C14 8 15 7 16 7H20C22 7 23 8 23 10V40H4ZM30 30H58V50H30Z"/><path fill="#5092D1" d="M0 27H10V60H0ZM15 19C15 18 16 18 17 18H34C35 18 36 19 36 20V60H15ZM45 37H60V55H45Z"/><g fill="#1C1C1C"><rect x="3" y="28" width="4" height="4"/><rect x="3" y="45" width="4" height="4"/><rect x="28" y="22" width="4" height="4"/><rect x="21" y="38" width="4" height="4"/><rect x="28" y="45" width="4" height="4"/></g><g fill="#FFE57A"><rect x="3" y="37" width="4" height="4"/><rect x="21" y="22" width="4" height="4"/><rect x="21" y="30" width="4" height="4"/><rect x="28" y="30" width="4" height="4"/><rect x="28" y="38" width="4" height="4"/><rect x="21" y="46" width="4" height="4"/><rect x="46" y="41" width="14" height="3"/><rect x="46" y="48" width="14" height="3"/></g><path fill="#D3D3D3" d="M0 0H60V6C54 8 50 4 44 6C38 8 32 4 26 6C20 8 14 4 8 6C4 7 2 6 0 5ZM0 53C6 51 12 55 20 52C28 50 34 56 42 53C50 50 54 54 60 52V60H0Z"/><path fill="#F4F4F4" d="M36 25C42 22 50 24 60 21V30H36Z"/></svg></div>
		<div class="tile"><svg class="icon icon-scene" viewBox="0 0 60 60"><rect width="60" height="60" fill="#6B5BA0"/><path fill="#1C1C1C" d="M5 14H14V9C14 8 15 7 16 7H21C23 7 24 8 24 10V40H5ZM30 30H53V50H30Z"/><path fill="#433B6B" d="M0 27H10V60H0ZM15 19C15 18 16 18 17 18H35C36 18 36 19 36 20V44H40V60H15ZM45 37H60V60H45Z"/><g fill="#1C1C1C"><rect x="3" y="28" width="4" height="4"/><rect x="3" y="45" width="4" height="4"/><rect x="28" y="22" width="4" height="4"/><rect x="21" y="38" width="4" height="4"/><rect x="28" y="45" width="4" height="4"/></g><g fill="#FFE57A"><rect x="3" y="37" width="4" height="4"/><rect x="21" y="22" width="4" height="4"/><rect x="21" y="30" width="4" height="4"/><rect x="28" y="30" width="4" height="4"/><rect x="28" y="38" width="4" height="4"/><rect x="21" y="46" width="4" height="4"/><rect x="46" y="41" width="14" height="3"/><rect x="46" y="49" width="14" height="3"/></g><g fill="#F3EEF8"><path d="M7 2L8 5L11 6L8 7L7 10L6 7L3 6L6 5Z"/><path d="M30 7L31 11L35 12L31 13L30 17L29 13L25 12L29 11Z"/><path d="M41 2L42 5L45 6L42 7L41 10L40 7L37 6L40 5Z"/><path d="M53 20L54 23L57 24L54 25L53 28L52 25L49 24L52 23Z"/></g><path fill="#FFB02E" d="M52 6C50 12 46 16 40 15C44 20 52 19 53 14C54 11 53 8 52 6Z"/></svg></div>
		<div class="tile"><svg class="icon icon-scene" viewBox="0 0 60 60"><rect width="60" height="60" fill="#FF6057"/><circle cx="30" cy="29" r="18" fill="#FF9F2E" stroke="#FF9F2E" stroke-width="4.500" stroke-linecap="round" stroke-dasharray="0 6.300"/><circle cx="30" cy="29" r="16" fill="#FCD53F"/><path fill="#15A18A" d="M0 48L6 41L14 46L26 40L45 48L54 41L60 44V60H0Z"/><path fill="#008463" d="M0 53L15 41L30 26L37 33L44 48L50 44L60 44V60H0Z"/><path fill="#00735A" d="M30 26L42 38L48 42L60 44V60H48L38 52L34 44C32 36 30 32 30 26Z"/></svg></div>
		<div class="tile"><svg class="icon icon-scene" viewBox="0 0 60 60"><rect width="60" height="60" fill="#FF6057"/><circle cx="29" cy="29" r="18" fill="#FF9F2E" stroke="#FF9F2E" stroke-width="4.500" stroke-linecap="round" stroke-dasharray="0 6.300"/><circle cx="29" cy="29" r="15.500" fill="#FCD53F"/><path fill="#4DA6FF" d="M0 41C4 38 8 42 12 40C16 38 20 42 24 40C28 38 32 42 36 40C40 38 44 42 48 40C52 38 56 41 60 40V60H0Z"/><rect x="14" y="45" width="32" height="2" fill="#F4F4F4"/><rect x="21" y="51.500" width="17" height="2" fill="#F4F4F4"/></svg></div>
		<div class="tile"><svg class="icon icon-scene" viewBox="0 0 60 60"><rect width="60" height="60" fill="#9B6CB8"/><path fill="#433B6B" d="M4 14H12V9C12 8 13 7 14 7H20C21 7 22 8 22 10V40H4ZM30 30H53V50H30Z"/><path fill="#5A4C8C" d="M0 27H8V60H0ZM15 19C15 18 16 18 17 18H34C35 18 36 19 36 20V44H40V60H15ZM45 37H60V60H45Z"/><g fill="#321B41"><rect x="3" y="31" width="3" height="4"/><rect x="28" y="23" width="4" height="4"/><rect x="21" y="39" width="4" height="4"/><rect x="28" y="47" width="4" height="4"/></g><g fill="#FFE57A"><rect x="3" y="42" width="3" height="4"/><rect x="21" y="23" width="4" height="4"/><rect x="21" y="31" width="4" height="4"/><rect x="28" y="31" width="4" height="4"/><rect x="28" y="39" width="4" height="4"/><rect x="21" y="47" width="4" height="4"/><rect x="47" y="41" width="13" height="3"/><rect x="47" y="49" width="13" height="3"/></g></svg></div>
		<div class="tile"><svg class="icon icon-scene" viewBox="0 0 60 60"><rect width="60" height="60" fill="#FF6057"/><circle cx="39" cy="22" r="18" fill="#FF9F2E" stroke="#FF9F2E" stroke-width="4.500" stroke-linecap="round" stroke-dasharray="0 6.300"/><circle cx="39" cy="23" r="14" fill="#FCD53F"/><path fill="#321B41" d="M5 14H13V9C13 8 14 7 15 7H20C21 7 22 8 22 10V40H5ZM30 30H55V50H30Z"/><path fill="#5A4C8C" d="M0 27H10V60H0ZM15 19C15 18 16 18 17 18H34C35 18 36 19 36 20V44H40V60H15ZM45 37H60V60H45Z"/><g fill="#321B41"><rect x="3" y="31" width="3" height="4"/><rect x="28" y="23" width="4" height="4"/><rect x="21" y="39" width="4" height="4"/><rect x="28" y="47" width="4" height="4"/></g><g fill="#FFE57A"><rect x="3" y="42" width="3" height="4"/><rect x="21" y="23" width="4" height="4"/><rect x="21" y="31" width="4" height="4"/><rect x="28" y="31" width="4" height="4"/><rect x="28" y="39" width="4" height="4"/><rect x="21" y="47" width="4" height="4"/><rect x="47" y="41" width="13" height="3"/><rect x="47" y="49" width="13" height="3"/></g></svg></div>
		<div class="tile"><svg class="icon icon-scene" viewBox="0 0 60 60"><rect width="60" height="60" fill="#533566"/><path fill="#FFB02E" d="M36 9C36 12 32 15 24 14C27 17 32 18 35 16C38 14 37 11 36 9Z"/><path fill="#4DB8FF" d="M0 41H60V60H0Z"/><rect y="52" width="60" height="8" fill="#00A6ED"/><path fill="#2E6BE0" d="M0 41C5 43 10 39 15 41C20 43 25 39 30 41C35 43 40 39 45 41C50 43 55 39 60 41V43C55 41 50 45 45 43C40 41 35 45 30 43C25 41 20 45 15 43C10 41 5 45 0 43Z"/><g fill="#F92F60"><rect y="34" width="60" height="3.500"/><rect x="10" y="8" width="3.500" height="44"/><rect x="45" y="8" width="3.500" height="44"/></g><g fill="none" stroke="#F92F60" stroke-width="1.600"><path d="M0 18C4 16 9 12 12 8C16 18 22 26 29 26C36 26 42 18 47 8C50 12 55 18 60 22"/><path d="M4 18V34M20 20V34M29 26V34M38 20V34M55 18V34"/></g><g fill="#F3EEF8"><ellipse cx="12" cy="53" rx="6" ry="1.500"/><ellipse cx="46" cy="53" rx="6" ry="1.500"/></g></svg></div>
		<div class="tile"><svg class="icon" viewBox="0 0 60 60"><path fill="#F8312F" d="M8 24C2 30 2 42 8 50C14 58 22 60 29 60C38 60 46 57 52 50C58 42 58 32 51 25C52 34 50 42 42 47C34 51 24 51 16 47C10 43 6 34 8 24ZM28 1C22 8 22 14 26 20C30 26 26 32 27 42C32 36 36 30 33 22C30 14 30 8 28 1ZM14 6C10 10 10 16 14 22C16 28 14 32 16 38C20 34 22 28 19 21C16 16 14 12 14 6ZM40 6C36 10 36 16 39 22C42 28 40 32 38 38C44 34 48 28 44 21C41 16 40 12 40 6Z"/></svg></div>
		<div class="tile"><svg class="icon icon-scene" viewBox="0 0 60 60"><rect width="60" height="60" fill="#321B41"/><path fill="#0074BA" d="M46 0H60V7C44 14 36 28 24 36C16 42 6 42 0 46V36C6 30 14 28 22 22C30 16 38 8 46 0ZM60 12V24C48 30 44 46 36 60H26C32 44 42 22 60 12Z"/><g fill="#FFB02E"><path d="M16 37L17 40L20 41L17 42L16 45L15 42L12 41L15 40Z"/><path d="M27 13L28 15L30 16L28 17L27 19L26 17L24 16L26 15Z"/><path d="M40 32L41 35L43 36L41 37L40 40L39 37L37 36L39 35Z"/></g><g fill="#26C9FC"><circle cx="42" cy="10" r="1.400"/><circle cx="37" cy="19" r="1.400"/><circle cx="18" cy="27" r="1"/><circle cx="25" cy="29" r="1.400"/><circle cx="35" cy="24" r="1"/><circle cx="33" cy="48" r="1.400"/><circle cx="8" cy="18" r="1"/><circle cx="12" cy="7" r=".8"/><circle cx="50" cy="52" r="1"/></g><g fill="#F4F4F4"><circle cx="7" cy="46" r="1"/><circle cx="30" cy="5" r=".8"/><circle cx="46" cy="50" r="1"/><circle cx="52" cy="35" r=".8"/></g></svg></div>
		<div class="tile"><svg class="icon" viewBox="0 0 60 60"><rect x="27" y="0" width="4.500" height="60" fill="#FFD74A"/><g fill="none" stroke-linecap="round" stroke-width="4.600"><path stroke="#D3883E" d="M21 37L14 56"/><path stroke="#D3883E" d="M41 40L38 55M51 38L47 56"/><path stroke="#F3AD61" d="M12 33L3 35L7 48"/></g><path fill="#6D4534" d="M47 20C55 19 56 28 58 36C59 40 55 42 52 39C53 34 50 26 46 23Z"/><path fill="#F3AD61" d="M5 8C8 3 14 3 16 6C20 10 24 16 27 19H45C52 19 54 26 53 33C52 38 48 42 42 41L26 40C18 42 13 36 13 28C13 24 14 22 13 20C10 22 6 23 3 21C0 20 -0.500 17 1 15Z"/><path fill="#6D4534" d="M3 5C8 1 13 2 17 6L27 19L23 20C19 15 16 11 12 8C9 6 6 6 3 5Z"/><path fill="#F3AD61" d="M6 1L9 4L5 6Z"/><rect x="21" y="19" width="18" height="11" fill="#F8312F"/></svg></div>
		<div class="tile"><svg class="icon" viewBox="0 0 60 60"><path fill="none" stroke="#E1D8EC" stroke-width="1.800" d="M30 28L14 58M30 28L46 58M17 50H43"/><rect x="7" y="57" width="47" height="3" rx="1" fill="#E1D8EC"/><g fill="none" stroke="#635994" stroke-width="1.400"><path d="M30 6V48M8 26H52M14 10L46 42M46 10L14 42"/></g><circle cx="30" cy="26" r="13" fill="none" stroke="#F9C23C" stroke-width="1.800"/><circle cx="30" cy="26" r="20" fill="none" stroke="#F9C23C" stroke-width="1.800"/><circle cx="30" cy="26" r="5" fill="#F9C23C"/><g fill="#D3D3D3"><rect x="25.500" y="1" width="9" height="3"/><rect x="6" y="6" width="9" height="3"/><rect x="45" y="6" width="9" height="3"/><rect x="0" y="22" width="9" height="3"/><rect x="51" y="22" width="9" height="3"/><rect x="6" y="37" width="9" height="3"/><rect x="45" y="37" width="9" height="3"/><rect x="25.500" y="44" width="9" height="3"/></g><g fill="#8D65C5"><rect x="25.500" y="4" width="9" height="5" rx="1"/><rect x="6" y="9" width="9" height="5" rx="1"/><rect x="45" y="9" width="9" height="5" rx="1"/><rect x="0" y="25" width="9" height="5" rx="1"/><rect x="51" y="25" width="9" height="5" rx="1"/><rect x="6" y="40" width="9" height="5" rx="1"/><rect x="45" y="40" width="9" height="5" rx="1"/><rect x="25.500" y="47" width="9" height="5" rx="1"/></g></svg></div>
		<div class="tile"><svg class="icon" viewBox="0 0 60 60"><g fill="#9B9B9B"><rect y="44" width="2" height="16"/><rect x="6" y="46" width="2" height="14"/><rect x="13" y="44" width="2" height="16"/><rect x="19" y="40" width="2" height="20"/><rect x="26" y="34" width="2" height="26"/><rect x="32" y="26" width="2" height="34"/><rect x="39" y="20" width="2" height="40"/><rect x="45" y="14" width="2" height="46"/><rect x="52" y="10" width="2" height="50"/><rect x="58" y="7" width="2" height="53"/></g><path fill="none" stroke="#1C1C1C" stroke-width="1" d="M24 31L43 10"/><path fill="none" stroke="#F8312F" stroke-width="4" d="M0 42C10 46 16 44 24 36L46 14C50 10 54 8 60 7"/><g fill="#FF822D"><rect x="19" y="26.500" width="13" height="5" rx="2.500" transform="rotate(-45 25.500 29)"/><rect x="28" y="16.500" width="13" height="5" rx="2.500" transform="rotate(-45 34.500 19)"/><rect x="37" y="6.500" width="13" height="5" rx="2.500" transform="rotate(-45 43.500 9)"/></g></svg></div>
		<div class="tile"><svg class="icon" viewBox="0 0 60 60"><path fill="#D3D3D3" d="M21 10C21 4 25 1 29 1C33 1 37 4 37 10Z"/><rect x="15" y="8" width="27" height="9" rx="4.500" fill="#9B9B9B"/><rect x="20" y="17" width="17" height="33" fill="#F4F4F4"/><path fill="#00A6ED" d="M20 19L37 16V19L20 22Z"/><path fill="#CA0B4A" d="M20 27L37 21V25L20 31Z"/><path fill="#00A6ED" d="M20 35L37 29V33L20 39Z"/><path fill="#CA0B4A" d="M20 43L37 37V41L20 47Z"/><path fill="#00A6ED" d="M20 50L37 45V49L26 50Z"/><rect x="15" y="50" width="27" height="10" rx="5" fill="#9B9B9B"/></svg></div>
		<div class="tile"><svg class="icon" viewBox="0 0 60 60"><rect x="29" y="1" width="2" height="14" fill="#FF822D"/><path fill="#F8312F" d="M31 2L38 5L31 8Z"/><path fill="#E1D8EC" d="M4 32H56L59 58C59 59 58 60 57 60H3C2 60 1 59 1 58Z"/><path fill="#CA0B4A" d="M4 32H12V60H3C2 60 1 59 1 58Z"/><path fill="#FF6057" d="M48 32H56L59 58C59 59 58 60 57 60H50Z"/><path fill="#F8312F" d="M20 34H40V40H20Z"/><path fill="#533566" d="M19 60V46C19 35 40 35 40 46V60Z"/><path fill="#E1D8EC" d="M30 14L3 31H57Z"/><path fill="#F92F60" d="M30 14L14 31H26Z"/><path fill="#FF6057" d="M30 14L34 31H46Z"/><path fill="#CDC4D6" d="M30 14L3 31H14Z"/><g fill="#E1D8EC"><circle cx="7" cy="32" r="4.500"/><circle cx="53" cy="32" r="4.500"/><circle cx="30" cy="32" r="4.500"/></g><g fill="#F8312F"><circle cx="18" cy="32" r="5"/><circle cx="42" cy="32" r="5"/></g></svg></div>

		<!-- row 5, only the top edge shows -->
		<div class="tile"></div><div class="tile"></div><div class="tile"></div><div class="tile"></div><div class="tile"></div>
		<div class="tile"></div><div class="tile"></div><div class="tile"></div><div class="tile"></div><div class="tile"></div>
		<div class="tile"></div><div class="tile"></div><div class="tile"></div><div class="tile"></div><div class="tile"></div>
	</div>
</body>

</html>
```

FILE: styles.css
```css
html {
	height: 100%;
	overflow: hidden;
}

body {
	font-family: "Open Sans", sans-serif;
	text-align: center;
	background-image: linear-gradient(90deg, #ff3cac 0%, #784ba0 50%, #2b86c5 100%);
	color: white;
	margin: 0;
	padding: 55px 0 0 5px;
	height: 100%;
	box-sizing: border-box;
	overflow: hidden;
}

h1 {
	font-size: 60px;
	font-weight: 600;
	line-height: 80px;
	letter-spacing: -1.8px;
	margin: 0 0 58px;
}

.subtitle {
	font-size: 23px;
	line-height: 30px;
	margin: 0 0 72px;
}

/* Categories */
.categories {
	display: flex;
	justify-content: center;
	gap: 18px;
	margin-bottom: 93px;
}

.category {
	height: 56px;
	padding: 0 18px;
	font-family: "Open Sans", sans-serif;
	font-size: 23px;
	color: white;
	background-color: rgba(255, 255, 255, 0.3);
	border: 1px solid white;
	border-radius: 10px;
	box-shadow: 0 0 8px rgba(255, 255, 255, 0.5);
	cursor: pointer;
}

.category-glow {
	background-color: rgba(255, 255, 255, 0.6);
	box-shadow: 0 0 10px rgba(255, 255, 255, 0.7);
}

/* Icons */
.icons {
	display: grid;
	grid-template-columns: repeat(15, 90px);
	grid-auto-rows: 90px;
	gap: 15px;
	justify-content: center;
}

.tile {
	background-color: #eeeeee;
	border-radius: 15px;
	padding-top: 18px;
	box-sizing: border-box;
	display: flex;
	justify-content: center;
	align-items: flex-start;
	cursor: pointer;
}

.icon {
	width: 60px;
	height: 60px;
	display: block;
	overflow: hidden;
}

.icon-scene {
	border-radius: 5px;
}

.glyph {
	font-family: "Open Sans", sans-serif;
	font-weight: 700;
}
```
